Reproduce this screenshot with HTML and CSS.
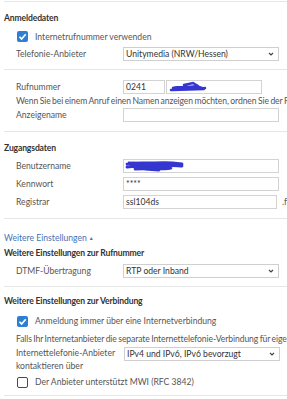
FILE: index.html
```html
<!DOCTYPE html>
<html lang="de">
<head>
    <meta charset="UTF-8">
    <meta name="viewport" content="width=device-width, initial-scale=1.0">
    <title>Internetrufnummer</title>
    <link rel="stylesheet" href="styles.css">
</head>
<body>
    <!-- Anmeldedaten -->
    <div class="section s-anmeldung">
        <h2>Anmeldedaten</h2>
        <label class="check">
            <span class="box on"><svg viewBox="0 0 10 10"><path d="M2.2 5.2 L4.2 7.2 L7.9 2.9" /></svg></span>
            Internetrufnummer verwenden
        </label>
        <div class="row">
            <span class="label">Telefonie-Anbieter</span>
            <div class="select">
                <span>Unitymedia (NRW/Hessen)</span>
                <svg class="chev" viewBox="0 0 6 4"><path d="M1 1 L3 3 L5 1" /></svg>
            </div>
        </div>
    </div>

    <div class="section s-rufnummer">
        <div class="row row-16">
            <span class="label">Rufnummer</span>
            <input class="input vorwahl" type="text" value="0241">
            <div class="scribbled">
                <input class="input nummer" type="text" value="">
                <svg class="scribble" viewBox="0 0 40 12"><path d="M3 9 C10 7 16 9 24 7 C29 6 33 8 37 7 M5 7 C12 5 20 7 28 5 L34 7 M16 4 L25 2 L30 5 M4 9 L36 8" /></svg>
            </div>
        </div>
        <p class="hint">Wenn Sie bei einem Anruf einen Namen anzeigen möchten, ordnen Sie der Rufnummer einen Namen zu.</p>
        <div class="row row-16">
            <span class="label">Anzeigename</span>
            <input class="input" type="text" value="">
        </div>
    </div>

    <!-- Zugangsdaten -->
    <div class="section s-zugang">
        <h2>Zugangsdaten</h2>
        <div class="row">
            <span class="label">Benutzername</span>
            <div class="scribbled">
                <input class="input" type="text" value="">
                <svg class="scribble s2" viewBox="0 0 60 12"><path d="M2 4 C10 2 20 3 30 3 C40 2 50 3 57 4 M2 7 C15 5 28 8 42 6 C48 5 53 6 57 6 M6 5 L52 5 M10 9 C22 8 34 10 46 8 M4 3 L18 4 M20 9 L34 10" /></svg>
            </div>
        </div>
        <div class="row">
            <span class="label">Kennwort</span>
            <input class="input" type="text" value="****">
        </div>
        <div class="row">
            <span class="label">Registrar</span>
            <input class="input" type="text" value="ssl104ds">
            <span class="suffix">.f</span>
        </div>
    </div>

    <div class="section s-weitere">
        <a class="more" href="#">Weitere Einstellungen<span class="tri">▲</span></a>
        <h2>Weitere Einstellungen zur Rufnummer</h2>
        <div class="row">
            <span class="label">DTMF-Übertragung</span>
            <div class="select">
                <span>RTP oder Inband</span>
                <svg class="chev" viewBox="0 0 6 4"><path d="M1 1 L3 3 L5 1" /></svg>
            </div>
        </div>
    </div>

    <div class="section s-verbindung">
        <h2>Weitere Einstellungen zur Verbindung</h2>
        <label class="check">
            <span class="box on"><svg viewBox="0 0 10 10"><path d="M2.2 5.2 L4.2 7.2 L7.9 2.9" /></svg></span>
            Anmeldung immer über eine Internetverbindung
        </label>
        <p class="hint">Falls Ihr Internetanbieter die separate Internettelefonie-Verbindung für eigene Telefonie nicht unterstützt</p>
        <div class="row row-top">
            <span class="label two-line">Internettelefonie-Anbieter kontaktieren über</span>
            <div class="select">
                <span>IPv4 und IPv6, IPv6 bevorzugt</span>
                <svg class="chev" viewBox="0 0 6 4"><path d="M1 1 L3 3 L5 1" /></svg>
            </div>
        </div>
        <label class="check">
            <span class="box"></span>
            Der Anbieter unterstützt MWI (RFC 3842)
        </label>
    </div>
</body>
</html>
```

FILE: styles.css
```css
body {
    margin: 0;
    padding-top: 1px;
    font-family: Lato, "Open Sans", sans-serif;
    font-size: 8.6px;
    color: #555;
    background-color: #fff;
    overflow: hidden;
    white-space: nowrap;
}

.section {
    margin-left: 4px;
    border-top: 1px solid #e6e6e6;
}

h2 {
    margin: 0;
    font-size: 8.6px;
    font-weight: bold;
    line-height: 12px;
    letter-spacing: -0.15px;
    color: #333;
}

.row {
    display: flex;
    align-items: center;
    height: 18px;
    padding-left: 12px;
}

.row-16 {
    height: 16px;
}

.label {
    width: 107px;
    flex: none;
}

.input {
    box-sizing: border-box;
    width: 156px;
    height: 14px;
    margin: 0;
    padding: 0 2px;
    border: 1px solid #d3d3d3;
    font-family: inherit;
    font-size: 8.6px;
    color: #333;
    background-color: #fff;
    outline: none;
}

.vorwahl {
    width: 42px;
    margin-right: 1px;
}

.nummer {
    width: 96px;
}

.scribbled {
    position: relative;
    display: flex;
}

.scribble {
    position: absolute;
    left: 2px;
    top: 1px;
    width: 40px;
    height: 12px;
    fill: none;
    stroke: #3436cf;
    stroke-width: 2.4;
    stroke-linecap: round;
}

.scribble.s2 {
    width: 60px;
    stroke-width: 2.8;
}

.suffix {
    margin-left: 5px;
}

.select {
    box-sizing: border-box;
    display: flex;
    align-items: center;
    justify-content: space-between;
    width: 156px;
    height: 14px;
    padding: 0 4px 0 2px;
    border: 1px solid #cfcfcf;
    color: #333;
}

.chev {
    width: 6px;
    height: 4px;
    fill: none;
    stroke: #444;
    stroke-width: 1.2;
}

.check {
    display: flex;
    align-items: center;
    height: 17px;
    padding-left: 13px;
    gap: 7px;
}

.box {
    box-sizing: border-box;
    display: flex;
    width: 11px;
    height: 11px;
    border: 1.5px solid #4a4a4a;
    border-radius: 2px;
}

.box.on {
    border: none;
    background-color: #2d7fd3;
}

.box svg {
    width: 11px;
    height: 11px;
    fill: none;
    stroke: #fff;
    stroke-width: 1.5;
}

.hint {
    margin: 0;
    padding-left: 12px;
    line-height: 12px;
    letter-spacing: -0.1px;
    word-spacing: -0.6px;
}

/* Abstaende der Abschnitte */
.s-anmeldung {
    padding: 10px 0 6px;
}

.s-anmeldung h2 {
    margin-bottom: 4px;
}

.s-rufnummer {
    padding: 9px 0 8px;
}

.s-zugang {
    padding: 10px 0 7px;
}

.s-zugang h2 {
    margin-bottom: 3px;
}

.s-weitere {
    padding: 13px 0 6px;
}

.more {
    display: block;
    line-height: 12px;
    color: #4872b3;
    text-decoration: none;
    margin-bottom: 3px;
}

.tri {
    font-size: 5px;
    margin-left: 2px;
    vertical-align: 1px;
}

.s-weitere h2 {
    margin-bottom: 3px;
}

.s-verbindung {
    padding: 8px 0 4px;
    border-bottom: 1px solid #e6e6e6;
}

.s-verbindung h2 {
    margin-bottom: 5px;
}

.s-verbindung .check {
    height: 18px;
}

.s-verbindung .hint {
    margin-top: 3px;
}

.row-top {
    align-items: flex-start;
    height: auto;
    margin-top: 2px;
}

.two-line {
    white-space: normal;
    width: 108px;
    line-height: 13px;
}
```
